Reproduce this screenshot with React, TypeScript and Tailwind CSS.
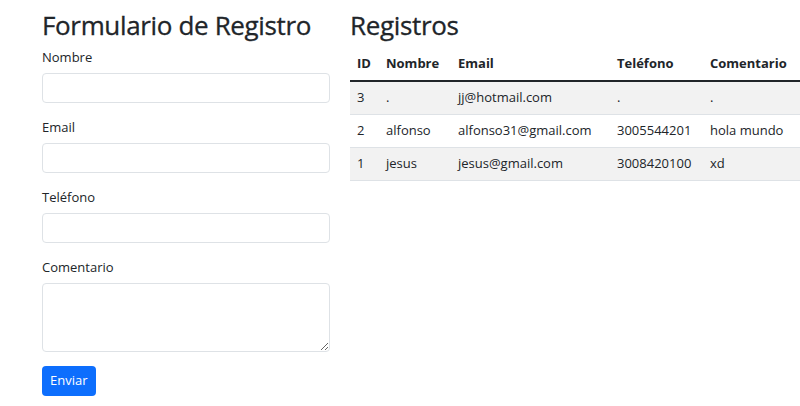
import { useState } from 'react';

interface IRegistro {
  id: number;
  nombre: string;
  email: string;
  telefono: string;
  comentario: string;
}

const registros: IRegistro[] = [
  { id: 3, nombre: '.', email: 'jj@hotmail.com', telefono: '.', comentario: '.' },
  { id: 2, nombre: 'alfonso', email: 'alfonso31@gmail.com', telefono: '3005544201', comentario: 'hola mundo' },
  { id: 1, nombre: 'jesus', email: 'jesus@gmail.com', telefono: '3008420100', comentario: 'xd' },
];

const Field = ({ label, value, onChange }: { label: string; value: string; onChange: (v: string) => void }) => (
  <div className="mb-[14px]">
    <label className="mb-[6px] block h-[20px] text-[13px] leading-[20px]">{label}</label>
    <input
      value={value}
      onChange={(e) => onChange(e.target.value)}
      className="block h-[30px] w-full rounded-[4px] border border-[#dee2e6] bg-white px-[10px] text-[13px] outline-none"
    />
  </div>
);

export default function App() {
  const [form, setForm] = useState({ nombre: '', email: '', telefono: '', comentario: '' });

  return (
    <div
      className="h-[406px] w-[800px] overflow-hidden bg-white text-[#212529]"
      style={{ fontFamily: '"Open Sans", "Noto Sans", sans-serif' }}
    >
      <div className="flex gap-[20px] pl-[42px]">
        <div className="w-[288px] shrink-0">
          <h2 className="mb-[6px] mt-[10px] h-[31px] whitespace-nowrap text-[26px] font-normal leading-[31px] tracking-[-0.35px] [-webkit-text-stroke:0.3px_#212529]">
            Formulario de Registro
          </h2>
          <Field label="Nombre" value={form.nombre} onChange={(v) => setForm({ ...form, nombre: v })} />
          <Field label="Email" value={form.email} onChange={(v) => setForm({ ...form, email: v })} />
          <Field label="Teléfono" value={form.telefono} onChange={(v) => setForm({ ...form, telefono: v })} />
          <div className="mb-[14px]">
            <label className="mb-[6px] block h-[20px] text-[13px] leading-[20px]">Comentario</label>
            <textarea
              value={form.comentario}
              onChange={(e) => setForm({ ...form, comentario: e.target.value })}
              className="block h-[69px] w-full rounded-[4px] border border-[#dee2e6] bg-white px-[10px] py-[5px] text-[13px] outline-none"
            />
          </div>
          <button className="h-[30px] rounded-[4px] bg-[#0d6efd] px-[8px] text-[13px] text-white">Enviar</button>
        </div>

        <div className="shrink-0">
          <h2 className="mb-[7px] mt-[10px] h-[31px] text-[26px] font-normal leading-[31px] tracking-[-0.35px] [-webkit-text-stroke:0.3px_#212529]">
            Registros
          </h2>
          <table className="w-[480px] table-fixed border-collapse text-left text-[13px]">
            <thead>
              <tr className="h-[33px] border-b-2 border-[#212529]">
                <th className="w-[29px] px-[7px] font-bold">ID</th>
                <th className="w-[72px] px-[7px] font-bold">Nombre</th>
                <th className="w-[159px] px-[7px] font-bold">Email</th>
                <th className="w-[93px] px-[7px] font-bold">Teléfono</th>
                <th className="w-[127px] px-[7px] font-bold">Comentario</th>
              </tr>
            </thead>
            <tbody>
              {registros.map((r, i) => (
                <tr
                  key={r.id}
                  className={`h-[33px] border-b border-[#dee2e6] ${i % 2 === 0 ? 'bg-[#f2f2f2]' : 'bg-white'}`}
                >
                  <td className="px-[7px]">{r.id}</td>
                  <td className="px-[7px]">{r.nombre}</td>
                  <td className="px-[7px]">{r.email}</td>
                  <td className="px-[7px]">{r.telefono}</td>
                  <td className="whitespace-nowrap px-[7px]">{r.comentario}</td>
                </tr>
              ))}
            </tbody>
          </table>
        </div>
      </div>
    </div>
  );
}
